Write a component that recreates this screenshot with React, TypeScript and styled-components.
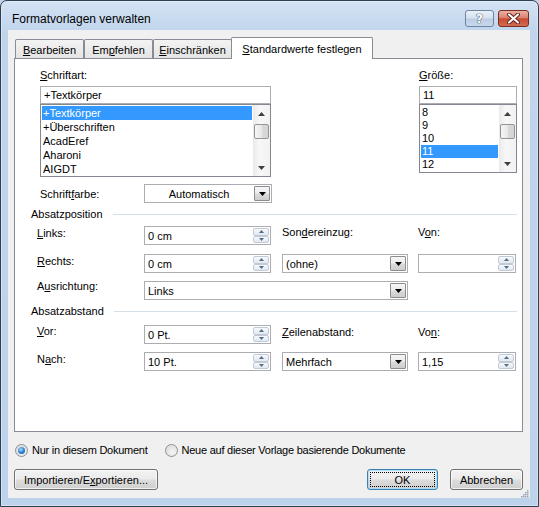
import styled, { createGlobalStyle } from "styled-components";

const GlobalStyle = createGlobalStyle`
  html, body {
    margin: 0;
    padding: 0;
    background: #bfd4ec;
  }
  body {
    font-family: "Liberation Sans", Arial, sans-serif;
    font-size: 11px;
    color: #000;
  }
  * {
    box-sizing: border-box;
  }
`;

const fontNames = ["+Textkörper", "+Überschriften", "AcadEref", "Aharoni", "AIGDT"];
const sizes = ["8", "9", "10", "11", "12"];

// small glyphs
const DownTri = ({ color = "#000", w = 7, h = 4 }: { color?: string; w?: number; h?: number }) => (
  <svg width={w} height={h} viewBox={`0 0 ${w} ${h}`}>
    <polygon points={`0,0 ${w},0 ${w / 2},${h}`} fill={color} />
  </svg>
);

const UpTri = ({ color = "#000", w = 7, h = 4 }: { color?: string; w?: number; h?: number }) => (
  <svg width={w} height={h} viewBox={`0 0 ${w} ${h}`}>
    <polygon points={`0,${h} ${w},${h} ${w / 2},0`} fill={color} />
  </svg>
);

const App = () => {
  return (
    <>
      <GlobalStyle />
      <Window>
        <TitleBar>
          <Title>Formatvorlagen verwalten</Title>
          <HelpButton>?</HelpButton>
          <CloseButton>
            <svg width="13" height="11" viewBox="0 0 13 11">
              <path d="M2 1.5 L11 9.5 M11 1.5 L2 9.5" stroke="#6b2418" strokeWidth="4" strokeLinecap="round" />
              <path d="M2 1.5 L11 9.5 M11 1.5 L2 9.5" stroke="#fff" strokeWidth="2" strokeLinecap="round" />
            </svg>
          </CloseButton>
        </TitleBar>

        <Client>
          <TabStrip>
            <Tab $w={69}><U>B</U>earbeiten</Tab>
            <Tab $w={69}>Em<U>p</U>fehlen</Tab>
            <Tab $w={79}><U>E</U>inschränken</Tab>
            <Tab $w={142} $active><U>S</U>tandardwerte festlegen</Tab>
          </TabStrip>

          <Panel>
            <FontRow>
              <FontCol $w={231}>
                <FieldLabel><U>S</U>chriftart:</FieldLabel>
                <TextInput>+Textkörper</TextInput>
                <ListBox $h={73}>
                  <ListItems>
                    {fontNames.map((n, i) => (
                      <ListItem key={n} $h={14} $selected={i === 0}>{n}</ListItem>
                    ))}
                  </ListItems>
                  <ScrollBar>
                    <ScrollArrow><UpTri color="#404040" w={7} h={4} /></ScrollArrow>
                    <Thumb />
                    <ScrollArrow $bottom><DownTri color="#404040" w={7} h={4} /></ScrollArrow>
                  </ScrollBar>
                </ListBox>
              </FontCol>
              <FontCol $w={98}>
                <FieldLabel><U>G</U>röße:</FieldLabel>
                <TextInput>11</TextInput>
                <ListBox $h={69}>
                  <ListItems>
                    {sizes.map((s) => (
                      <ListItem key={s} $h={13} $selected={s === "11"}>{s}</ListItem>
                    ))}
                  </ListItems>
                  <ScrollBar>
                    <ScrollArrow><UpTri color="#404040" w={7} h={4} /></ScrollArrow>
                    <Thumb />
                    <ScrollArrow $bottom><DownTri color="#404040" w={7} h={4} /></ScrollArrow>
                  </ScrollBar>
                </ListBox>
              </FontCol>
            </FontRow>

            <ColorRow>
              <FieldLabel>Schrift<U>f</U>arbe:</FieldLabel>
              <Combo $w={128}>
                <ComboText $center>Automatisch</ComboText>
                <ComboButton><DownTri /></ComboButton>
              </Combo>
            </ColorRow>

            <SectionHeader $top={4}>
              <span>Absatzposition</span>
              <SectionLine />
            </SectionHeader>

            <FormRow $top={5}>
              <FieldLabel><U>L</U>inks:</FieldLabel>
              <SpinBox $w={127}>
                <SpinText>0 cm</SpinText>
                <SpinButtons />
              </SpinBox>
              <FieldLabel $shift={-1}>Son<U>d</U>ereinzug:</FieldLabel>
              <FieldLabel $shift={-1}>V<U>o</U>n:</FieldLabel>
            </FormRow>

            <FormRow $top={9}>
              <FieldLabel><U>R</U>echts:</FieldLabel>
              <SpinBox $w={127}>
                <SpinText>0 cm</SpinText>
                <SpinButtons />
              </SpinBox>
              <Combo $w={126}>
                <ComboText>(ohne)</ComboText>
                <ComboButton><DownTri /></ComboButton>
              </Combo>
              <SpinBox $w={98}>
                <SpinText />
                <SpinButtons />
              </SpinBox>
            </FormRow>

            <FormRow $top={8}>
              <FieldLabel $shift={-2}>A<U>u</U>srichtung:</FieldLabel>
              <Combo $w={264} $span={2}>
                <ComboText>Links</ComboText>
                <ComboButton><DownTri /></ComboButton>
              </Combo>
            </FormRow>

            <SectionHeader $top={4}>
              <span>Absatzabstand</span>
              <SectionLine />
            </SectionHeader>

            <FormRow $top={7}>
              <FieldLabel $shift={-1}><U>V</U>or:</FieldLabel>
              <SpinBox $w={127}>
                <SpinText>0 Pt.</SpinText>
                <SpinButtons />
              </SpinBox>
              <FieldLabel><U>Z</U>eilenabstand:</FieldLabel>
              <FieldLabel>Vo<U>n</U>:</FieldLabel>
            </FormRow>

            <FormRow $top={8}>
              <FieldLabel>N<U>a</U>ch:</FieldLabel>
              <SpinBox $w={127}>
                <SpinText>10 Pt.</SpinText>
                <SpinButtons />
              </SpinBox>
              <Combo $w={126}>
                <ComboText>Mehrfach</ComboText>
                <ComboButton><DownTri /></ComboButton>
              </Combo>
              <SpinBox $w={98}>
                <SpinText>1,15</SpinText>
                <SpinButtons />
              </SpinBox>
            </FormRow>
          </Panel>

          <RadioRow>
            <RadioOption>
              <RadioCircle $checked />
              Nur in diesem Dokument
            </RadioOption>
            <RadioOption>
              <RadioCircle />
              Neue auf dieser Vorlage basierende Dokumente
            </RadioOption>
          </RadioRow>

          <ButtonRow>
            <Button $w={144}>Importieren/E<U>x</U>portieren...</Button>
            <Spacer />
            <Button $w={71} $default>OK</Button>
            <Button $w={73}>Abbrechen</Button>
          </ButtonRow>

          <Grip>
            <svg width="8" height="8" viewBox="0 0 8 8">
              {[[6, 0], [4, 2], [6, 2], [2, 4], [4, 4], [6, 4], [0, 6], [2, 6], [4, 6], [6, 6]].map(([x, y]) => (
                <rect key={`${x}-${y}`} x={x} y={y} width="1.5" height="1.5" fill="#9aa6b4" />
              ))}
            </svg>
          </Grip>
        </Client>
      </Window>
    </>
  );
};

const SpinButtons = () => (
  <SpinStack>
    <SpinButton><UpTri color="#4f6d8f" w={5} h={3} /></SpinButton>
    <SpinButton><DownTri color="#4f6d8f" w={5} h={3} /></SpinButton>
  </SpinStack>
);

const Window = styled.div`
  width: 539px;
  height: 507px;
  border: 1px solid #2f3f52;
  border-radius: 7px 7px 0 0;
  background: linear-gradient(to bottom, #d4e3f4 0px, #c0d5ec 30px, #bdd3eb 100%);
  box-shadow: inset 0 0 0 1px rgba(255, 255, 255, 0.35);
  padding: 0 8px 8px 7px;
  display: flex;
  flex-direction: column;
`;

const TitleBar = styled.div`
  height: 29px;
  display: flex;
  align-items: flex-start;
  padding-left: 4px;
`;

const Title = styled.div`
  flex: 1;
  font-size: 12px;
  line-height: 14px;
  margin-top: 11px;
`;

const HelpButton = styled.div`
  width: 29px;
  height: 17px;
  margin-top: 9px;
  border: 1px solid #6d83a0;
  border-radius: 3px;
  background: linear-gradient(#e9f0f8 0%, #d6e2f0 48%, #bccde3 52%, #c9d9ec 100%);
  display: flex;
  align-items: center;
  justify-content: center;
  font-family: "DejaVu Sans", sans-serif;
  font-weight: bold;
  font-size: 12px;
  color: #fff;
  text-shadow: 0 0 1px #4a5a70, 0 0 1px #4a5a70, 0 0 1px #4a5a70;
`;

const CloseButton = styled.div`
  width: 31px;
  height: 17px;
  margin: 9px 1px 0 4px;
  border: 1px solid #7b2c20;
  border-radius: 3px;
  background: linear-gradient(#eab1a3 0%, #d98370 45%, #c94a33 52%, #d26b53 100%);
  display: flex;
  align-items: center;
  justify-content: center;
`;

const Client = styled.div`
  flex: 1;
  position: relative;
  background: #f0f0f0;
  padding: 7px 7px 8px 6px;
  display: flex;
  flex-direction: column;
`;

const TabStrip = styled.div`
  height: 21px;
  display: flex;
  align-items: flex-end;
  padding-left: 1px;
  position: relative;
  z-index: 2;
`;

const Tab = styled.div<{ $w: number; $active?: boolean }>`
  width: ${(p) => p.$w}px;
  height: ${(p) => (p.$active ? 22 : 19)}px;
  margin: ${(p) => (p.$active ? "0 0 -1px -1px" : "0")};
  border: 1px solid #898c95;
  border-bottom: none;
  border-radius: 2px 2px 0 0;
  background: ${(p) => (p.$active ? "#fff" : "linear-gradient(#f3f3f3, #e4e4e4)")};
  display: flex;
  align-items: center;
  justify-content: center;
  padding-top: ${(p) => (p.$active ? 0 : 2)}px;
  white-space: nowrap;
`;

const Panel = styled.div`
  flex: 1;
  background: #fff;
  border: 1px solid #898c95;
  padding: 9px 5px 0 16px;
  display: flex;
  flex-direction: column;
`;

const U = styled.span`
  text-decoration: underline;
  text-underline-offset: 1px;
`;

const FieldLabel = styled.div<{ $shift?: number }>`
  height: 14px;
  line-height: 14px;
  white-space: nowrap;
  margin-top: ${(p) => p.$shift ?? 0}px;
`;

const FontRow = styled.div`
  display: flex;
  justify-content: space-between;
  margin-left: 9px;
`;

const FontCol = styled.div<{ $w: number }>`
  width: ${(p) => p.$w}px;
  display: flex;
  flex-direction: column;
  ${FieldLabel} {
    margin-bottom: 4px;
  }
`;

const TextInput = styled.div`
  height: 18px;
  border: 1px solid #abadb3;
  padding-left: 3px;
  display: flex;
  align-items: center;
`;

const ListBox = styled.div<{ $h: number }>`
  height: ${(p) => p.$h}px;
  border: 1px solid #828790;
  display: flex;
`;

const ListItems = styled.div`
  flex: 1;
  padding: 1px 1px 0 1px;
`;

const ListItem = styled.div<{ $h: number; $selected?: boolean }>`
  height: ${(p) => p.$h}px;
  line-height: ${(p) => p.$h}px;
  padding-left: 1px;
  white-space: nowrap;
  background: ${(p) => (p.$selected ? "#3399ff" : "transparent")};
  color: ${(p) => (p.$selected ? "#fff" : "#000")};
`;

const ScrollBar = styled.div`
  width: 17px;
  display: flex;
  flex-direction: column;
  background: linear-gradient(to right, #eaeaea, #f7f7f7 40%, #f2f2f2);
`;

const ScrollArrow = styled.div<{ $bottom?: boolean }>`
  height: 17px;
  display: flex;
  align-items: center;
  justify-content: center;
  margin-top: ${(p) => (p.$bottom ? "auto" : "0")};
`;

const Thumb = styled.div`
  height: 15px;
  margin: 2px 1px 0 1px;
  border: 1px solid #959595;
  border-radius: 2px;
  background: linear-gradient(to right, #f5f5f5, #e8e8e8 50%, #dadada 51%, #d4d4d4);
`;

const ColorRow = styled.div`
  display: flex;
  align-items: center;
  margin: 7px 0 0 9px;
  ${FieldLabel} {
    width: 104px;
  }
`;

const Combo = styled.div<{ $w: number; $span?: number }>`
  width: ${(p) => p.$w}px;
  height: 19px;
  border: 1px solid #abadb3;
  background: #fff;
  display: flex;
  grid-column: ${(p) => (p.$span ? `span ${p.$span}` : "auto")};
`;

const ComboText = styled.div<{ $center?: boolean }>`
  flex: 1;
  display: flex;
  align-items: center;
  justify-content: ${(p) => (p.$center ? "center" : "flex-start")};
  padding-left: ${(p) => (p.$center ? 0 : 3)}px;
  white-space: nowrap;
`;

const ComboButton = styled.div`
  width: 16px;
  margin: 1px;
  border: 1px solid #8d8d8d;
  border-radius: 1px;
  background: linear-gradient(#f6f6f6 0%, #ececec 48%, #dcdcdc 52%, #cdcdcd 100%);
  display: flex;
  align-items: center;
  justify-content: center;
`;

const SectionHeader = styled.div<{ $top: number }>`
  display: flex;
  align-items: center;
  height: 14px;
  margin-top: ${(p) => p.$top}px;
  white-space: nowrap;
`;

const SectionLine = styled.div`
  flex: 1;
  height: 1px;
  margin-left: 10px;
  background: #d5dfe5;
`;

const FormRow = styled.div<{ $top: number }>`
  display: grid;
  grid-template-columns: 107px 138px 136px 98px;
  align-items: start;
  margin: ${(p) => p.$top}px 0 0 6px;
`;

const SpinBox = styled.div<{ $w: number }>`
  width: ${(p) => p.$w}px;
  height: 19px;
  border: 1px solid #abadb3;
  background: #fff;
  display: flex;
`;

const SpinText = styled.div`
  flex: 1;
  display: flex;
  align-items: center;
  padding-left: 3px;
`;

const SpinStack = styled.div`
  width: 16px;
  margin: 1px;
  display: flex;
  flex-direction: column;
`;

const SpinButton = styled.div`
  flex: 1;
  border: 1px solid #c2cbd5;
  border-radius: 2px;
  background: linear-gradient(#f7f9fb, #e1e8ef);
  display: flex;
  align-items: center;
  justify-content: center;
`;

const RadioRow = styled.div`
  height: 14px;
  margin-top: 11px;
  padding-left: 1px;
  display: flex;
  align-items: center;
  gap: 17px;
`;

const RadioOption = styled.div`
  display: flex;
  align-items: center;
  gap: 4px;
  white-space: nowrap;
  letter-spacing: -0.25px;
`;

const RadioCircle = styled.span<{ $checked?: boolean }>`
  position: relative;
  width: 13px;
  height: 13px;
  border-radius: 50%;
  border: 1px solid #8e8f8f;
  background: radial-gradient(circle at 60% 65%, #f4f4f4, #d8d8d8);
  &::after {
    content: "";
    display: ${(p) => (p.$checked ? "block" : "none")};
    position: absolute;
    left: 2px;
    top: 2px;
    width: 7px;
    height: 7px;
    border-radius: 50%;
    background: radial-gradient(circle at 40% 35%, #a6dcff, #2a7dd0 55%, #164f9a);
  }
`;

const ButtonRow = styled.div`
  height: 21px;
  margin-top: 12px;
  display: flex;
  gap: 12px;
`;

const Spacer = styled.div`
  flex: 1;
`;

const Button = styled.div<{ $w: number; $default?: boolean }>`
  position: relative;
  width: ${(p) => p.$w}px;
  height: 21px;
  border: 1px solid ${(p) => (p.$default ? "#3c7fb1" : "#707070")};
  border-radius: 3px;
  background: linear-gradient(#f2f2f2 0%, #ebebeb 48%, #dddddd 52%, #cfcfcf 100%);
  box-shadow: inset 0 0 0 1px ${(p) => (p.$default ? "rgba(160, 220, 250, 0.8)" : "rgba(255, 255, 255, 0.7)")};
  display: flex;
  align-items: center;
  justify-content: center;
  white-space: nowrap;
  &::after {
    content: "";
    display: ${(p) => (p.$default ? "block" : "none")};
    position: absolute;
    inset: 2px;
    border: 1px dotted #000;
  }
`;

const Grip = styled.div`
  position: absolute;
  right: 1px;
  bottom: 0;
  width: 8px;
  height: 8px;
  display: flex;
`;

export default App;
